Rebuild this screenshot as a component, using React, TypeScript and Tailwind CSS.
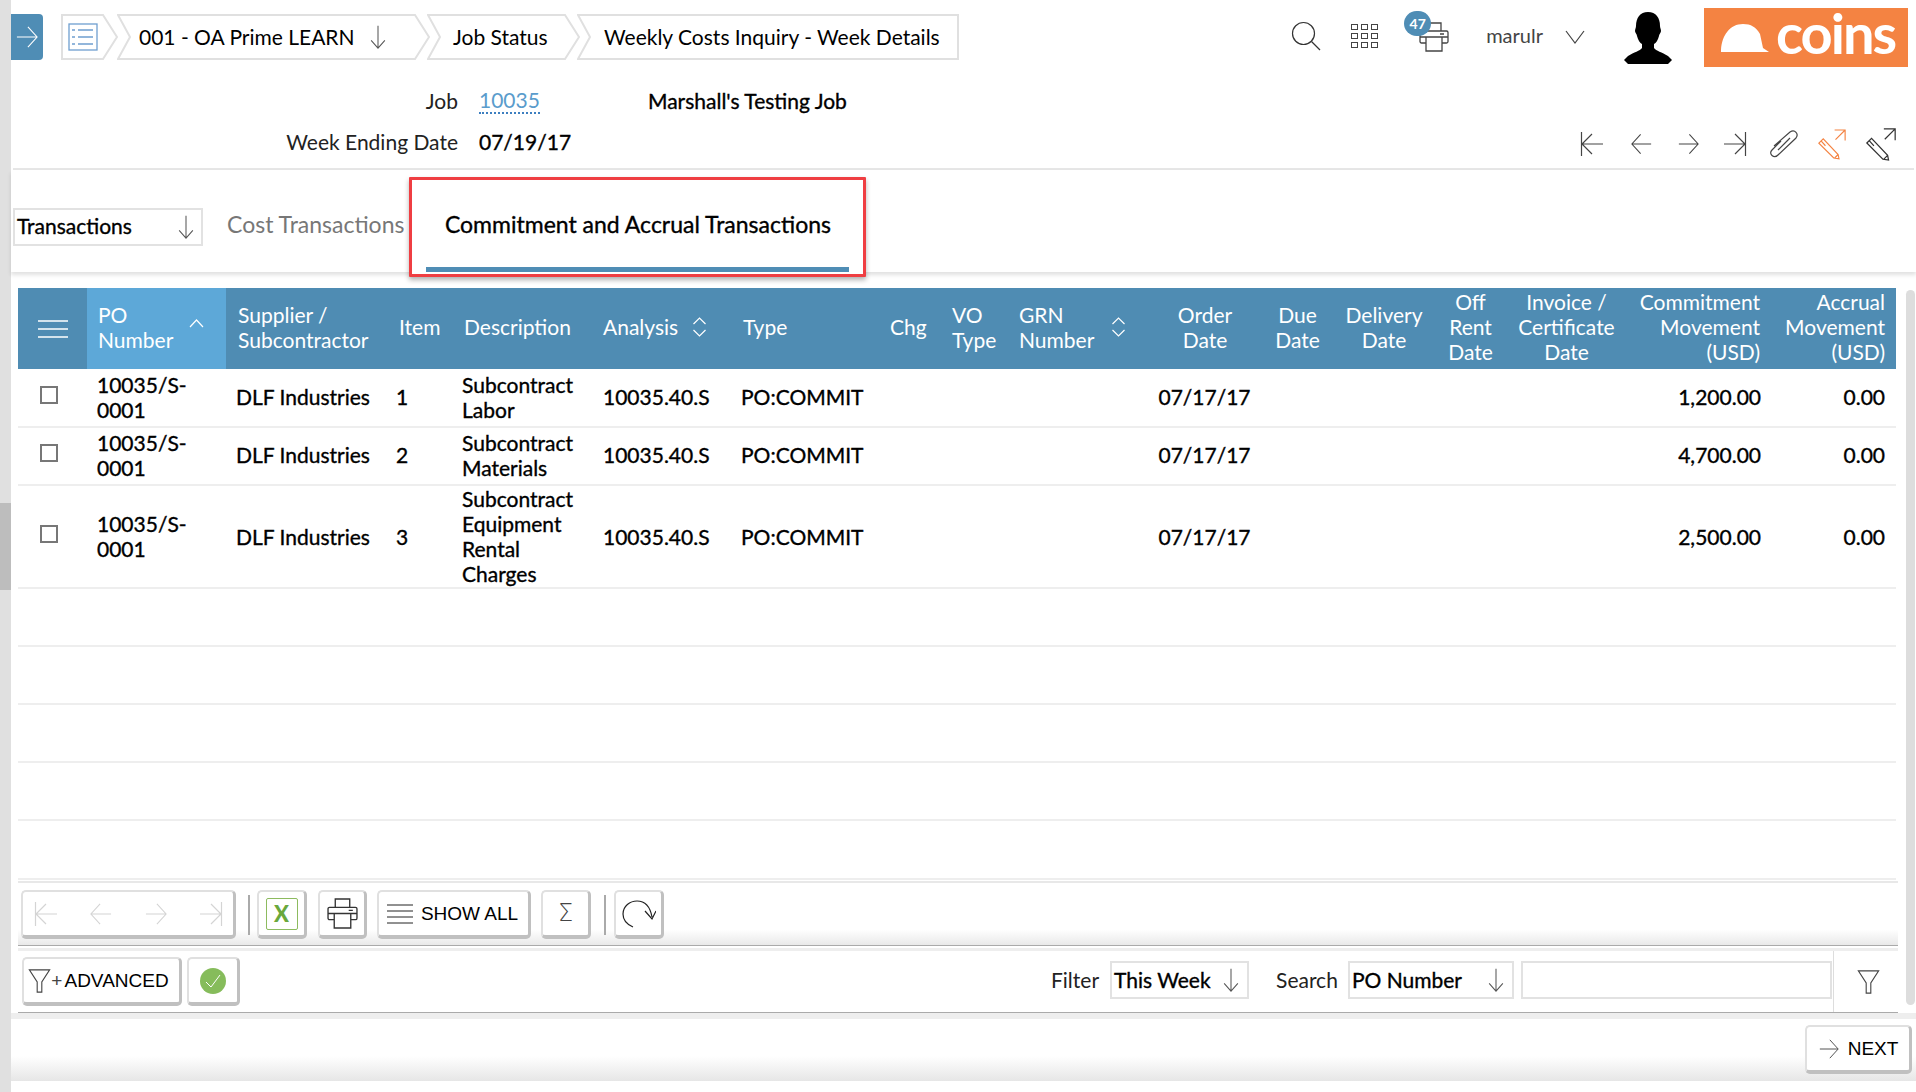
import type { ReactNode } from 'react'

type IconProps = { className?: string }

// Lato has no medium cut here, the data text gets a hair of stroke instead
const strong = '[-webkit-text-stroke:0.35px_black]'

function Ico({ className = '', box = '0 0 24 24', children }: { className?: string; box?: string; children: ReactNode }) {
  return (
    <svg viewBox={box} fill="none" stroke="currentColor" strokeWidth="1.2" className={className}>
      {children}
    </svg>
  )
}

const ArrowRight = ({ className }: IconProps) => (
  <Ico className={className}>
    <path d="M1 12H23M13 1l10 11-10 11" />
  </Ico>
)
const ArrowLeft = ({ className }: IconProps) => (
  <Ico className={className}>
    <path d="M23 12H1M11 1L1 12l10 11" />
  </Ico>
)
const ArrowFirst = ({ className }: IconProps) => (
  <Ico className={className}>
    <path d="M1.5 0V24M23 12H2M12 2L2 12l10 10" />
  </Ico>
)
const ArrowLast = ({ className }: IconProps) => (
  <Ico className={className}>
    <path d="M22.5 0V24M1 12H22M12 2l10 10-10 10" />
  </Ico>
)
const ArrowDown = ({ className }: IconProps) => (
  <Ico className={className} box="0 0 20 28">
    <path d="M10 1V27M2 18l8 9 8-9" />
  </Ico>
)
const Printer = ({ className }: IconProps) => (
  <Ico className={className} box="0 0 30 30">
    <path d="M8 9V1h14v8M7 21H2.500A1.500 1.500 0 0 1 1 19.500V10.500A1.500 1.500 0 0 1 2.500 9h25A1.500 1.500 0 0 1 29 10.500v9a1.500 1.500 0 0 1-1.500 1.500H23M1 15h28M7 15h16v14H7zM21 12h4" strokeWidth="1.300" />
  </Ico>
)
const Pencil = ({ className }: IconProps) => (
  <Ico className={className} box="0 0 32 36">
    <path d="M1 17l5-5 17 18 1 5-6-1zM3.500 14.500l5 5.500M19 34l4-4M19 2h12v12M31 2L20 13" strokeWidth="1.300" />
  </Ico>
)
const Funnel = ({ className }: IconProps) => (
  <Ico className={className} box="0 0 24 26">
    <path d="M1 1h22l-8.500 13v11h-5V14z" />
  </Ico>
)

function Crumb({ width, kind = 'mid', children }: { width: number; kind?: 'first' | 'mid' | 'last'; children: ReactNode }) {
  const right = kind === 'last' ? `H${width - 1}V45H1` : `H${width - 15}L${width - 1} 23L${width - 15} 45H1`
  const d = kind === 'first' ? `M1 1${right}Z` : `M1 1${right}L13 23Z`
  return (
    <div className="relative flex h-[46px] shrink-0 items-center" style={{ width }}>
      <svg className="absolute inset-0 h-full w-full" viewBox={`0 0 ${width} 46`} fill="white" stroke="#e0e0e0" strokeWidth="2">
        <path d={d} />
      </svg>
      <div className="relative flex w-full items-center">{children}</div>
    </div>
  )
}

function Button({ className = '', children }: { className?: string; children: ReactNode }) {
  return (
    <div className={`flex h-[49px] shrink-0 items-center justify-center rounded-[5px] border-2 border-b-[4px] border-r-[3px] border-[#e0e0e0] border-r-[#c0c0c0] border-b-[#c0c0c0] bg-white ${className}`}>
      {children}
    </div>
  )
}

function Select({ className = '', label }: { className?: string; label: string }) {
  return (
    <div className={`mb-[3px] flex h-[38px] items-center justify-between border-2 border-[#e2e2e2] bg-white pl-[2px] pr-[6px] ${className}`}>
      <span className={`mb-[2px] ${strong}`}>{label}</span>
      <ArrowDown className="h-[24px] w-[20px] text-[#555]" />
    </div>
  )
}

const SortBoth = () => (
  <Ico className="h-[20px] w-[15px] shrink-0" box="0 0 15 20">
    <path d="M1.500 7L7.500 1l6 6M1.500 13l6 6 6-6" />
  </Ico>
)

const rows = [
  { item: '1', desc: ['Subcontract', 'Labor'], amt: '1,200.00', h: 'h-[59px] pb-[2px]' },
  { item: '2', desc: ['Subcontract', 'Materials'], amt: '4,700.00', h: 'h-[58px] pb-[3px]' },
  { item: '3', desc: ['Subcontract', 'Equipment', 'Rental', 'Charges'], amt: '2,500.00', h: 'h-[103px] pb-[4px]' },
]

const cols =
  'grid grid-cols-[69px_139px_165px_65px_140px_138px_147px_62px_66px_142px_110px_75px_98px_77px_112px_148px_125px]'

export default function App() {
  return (
    <div className="flex h-[1092px] w-[1916px] overflow-hidden bg-white font-[Lato,sans-serif] text-[21px] leading-[25px] text-black">
      {/* scroll strip on the left */}
      <div className="flex w-[11px] shrink-0 flex-col bg-[#e0e0e0]">
        <div className="mt-[503px] h-[87px] bg-[#bdbdbd]" />
      </div>

      <div className="relative min-w-0 flex-1">
        {/* top bar */}
        <div className="flex h-[68px] items-start">
          <div className="mt-[14px] flex h-[46px] w-[32px] items-center justify-center rounded-r-[4px] bg-[#4f8db5] text-white">
            <ArrowRight className="h-[24px] w-[22px]" />
          </div>
          <div className="ml-[18px] mt-[14px] flex">
            <Crumb width={57} kind="first">
              <svg viewBox="0 0 30 28" className="ml-[7px] h-[28px] w-[30px]" fill="none" stroke="#6f9fd0" strokeWidth="1.300">
                <rect x="1" y="1" width="28" height="26" />
                <path d="M10 7h15M10 14h15M10 21h15M4 7h3M4 14h3M4 21h3" />
              </svg>
            </Crumb>
            <div className="-ml-[1px]">
              <Crumb width={313}>
                <span className="mb-[2px] ml-[22px] whitespace-nowrap">001 - OA Prime LEARN</span>
                <ArrowDown className="ml-[13px] h-[24px] w-[20px] text-[#555]" />
              </Crumb>
            </div>
            <div className="-ml-[3px]">
              <Crumb width={153}>
                <span className="mb-[2px] ml-[26px] whitespace-nowrap">Job Status</span>
              </Crumb>
            </div>
            <div className="-ml-[3px]">
              <Crumb width={382} kind="last">
                <span className="mb-[2px] ml-[27px] whitespace-nowrap">Weekly Costs Inquiry - Week Details</span>
              </Crumb>
            </div>
          </div>

          <div className="ml-auto flex items-start">
            <Ico className="mt-[21px] h-[30px] w-[30px] text-[#333]" box="0 0 30 30">
              <circle cx="12.500" cy="12.500" r="11" />
              <path d="M20.500 20.500L29 29" />
            </Ico>
            <div className="ml-[30px] mt-[24px] grid w-[27px] grid-cols-3 gap-[3px]">
              {Array.from({ length: 9 }).map((_, i) => (
                <div key={i} className="h-[6px] w-[7px] border border-[#444]" />
              ))}
            </div>
            <div className="relative ml-[41px] mt-[22px] h-[30px] w-[30px]">
              <Printer className="h-[30px] w-[30px] text-[#444]" />
              <div className="absolute -left-[15px] -top-[11px] flex h-[25px] w-[27px] items-center justify-center rounded-full bg-[#4f8db5] text-[14px] font-bold text-white">
                47
              </div>
            </div>
            <span className="ml-[37px] mt-[23px] text-[20px] text-[#444]">marulr</span>
            <Ico className="ml-[22px] mt-[30px] h-[14px] w-[20px] text-[#444]" box="0 0 20 14">
              <path d="M1 1l9 12 9-12" />
            </Ico>
            <svg viewBox="0 0 48 52" className="ml-[39px] mt-[12px] h-[52px] w-[48px]" fill="black">
              <path d="M24 0c8 0 12 6 12 14 0 2 1 3 1 5s-2 3-2 5c-1 4-3 7-5 8v4c2 3 8 4 14 8l4 4-4 4H4l-4-4 4-4c6-4 12-5 14-8v-4c-2-1-4-4-5-8 0-2-2-3-2-5s1-3 1-5C12 6 16 0 24 0z" />
            </svg>
            <div className="ml-[32px] mr-[8px] mt-[8px] flex h-[59px] w-[204px] items-center bg-[#f48342] pl-[16px] text-white">
              <svg viewBox="0 0 50 30" className="h-[30px] w-[50px] shrink-0" fill="white">
                <path d="M1 27C2 12 10 1 23 1c8 0 13 3 17 10l3 14 6 4H1z" />
              </svg>
              <span className="mb-[9px] ml-[6px] text-[56px] font-bold leading-none tracking-[-2px]">coins</span>
            </div>
          </div>
        </div>

        {/* job info */}
        <div className="relative h-[100px]">
          <div className="grid grid-cols-[447px_auto_1fr] items-center gap-x-[21px] gap-y-[15px] pt-[19px]">
            <span className="text-right text-[#222]">Job</span>
            <div className="flex items-center">
              <span className="w-[169px]">
                <span className="inline-block border-b-2 border-dotted border-[#3d7fc0] text-[#5a9ccc]">10035</span>
              </span>
              <span className={strong}>Marshall&apos;s Testing Job</span>
            </div>
            <span />
            <span className="text-right text-[#222]">Week Ending Date</span>
            <span className={strong}>07/19/17</span>
            <span />
          </div>
          <div className="absolute right-[19px] top-[59px] flex items-center text-[#444]">
            <ArrowFirst className="h-[28px] w-[24px]" />
            <ArrowLeft className="ml-[27px] h-[22px] w-[21px]" />
            <ArrowRight className="ml-[26px] h-[22px] w-[21px]" />
            <ArrowLast className="ml-[24px] h-[28px] w-[24px]" />
            <Ico className="ml-[21px] h-[30px] w-[32px]" box="0 0 32 30">
              <path d="M13 12L4 21c-4 4 2 9 6 5L28 9c3-4-1-9-6-6L6 17M22 9L10 21" />
            </Ico>
            <Pencil className="ml-[18px] h-[32px] w-[28px] text-[#f48342]" />
            <Pencil className="ml-[19px] h-[34px] w-[32px] text-[#333]" />
          </div>
        </div>
        <div className="mx-[2px] h-[2px] bg-[#e6e6e6]" />

        {/* tabs */}
        <div className="flex h-[102px] items-start shadow-[0_3px_4px_rgba(0,0,0,0.12)]">
          <div className="ml-[2px] mt-[38px] flex h-[38px] w-[190px] items-center justify-between border-2 border-[#e2e2e2] pl-[2px] pr-[5px]">
            <span className={`mb-[3px] ${strong}`}>Transactions</span>
            <ArrowDown className="h-[24px] w-[20px] text-[#555]" />
          </div>
          <span className="ml-[24px] mt-[42px] whitespace-nowrap text-[23px] text-[#777]">Cost Transactions</span>
          <div className="relative z-10 ml-[5px] mt-[7px] flex h-[100px] w-[457px] flex-col items-center rounded-[1px] border-[3px] border-[#ef3e42] bg-white shadow-[0_3px_5px_rgba(0,0,0,0.3)]">
            <span className={`mt-[32px] whitespace-nowrap text-[23px] ${strong}`}>Commitment and Accrual Transactions</span>
            <div className="mt-[30px] h-[5px] w-[423px] bg-[#4f8db5]" />
          </div>
        </div>

        {/* grid */}
        <div className="ml-[7px] mt-[16px] w-[1878px]">
          <div className={`${cols} h-[81px] items-center bg-[#4f8cb3] leading-[25px] text-white`}>
            <div className="flex justify-center">
              <svg viewBox="0 0 30 18" className="h-[18px] w-[30px]" stroke="white" strokeWidth="1.500">
                <path d="M0 1h30M0 9h30M0 17h30" />
              </svg>
            </div>
            <div className="flex h-full items-center justify-between bg-[#5da8d8] pb-[4px] pl-[11px] pr-[22px]">
              <span>
                PO
                <br />
                Number
              </span>
              <Ico className="mb-[6px] h-[9px] w-[15px]" box="0 0 15 9">
                <path d="M1 8l6.500-7 6.500 7" />
              </Ico>
            </div>
            <div className="pb-[4px] pl-[12px]">
              Supplier /
              <br />
              Subcontractor
            </div>
            <div className="pb-[4px] pl-[8px]">Item</div>
            <div className="pb-[4px] pl-[8px]">Description</div>
            <div className="flex items-center gap-[14px] pb-[4px] pl-[7px]">
              <span>Analysis</span>
              <SortBoth />
            </div>
            <div className="pb-[4px] pl-[9px]">Type</div>
            <div className="pb-[4px] pl-[9px]">Chg</div>
            <div className="pb-[4px] pl-[9px]">
              VO
              <br />
              Type
            </div>
            <div className="flex items-center gap-[17px] pb-[4px] pl-[10px]">
              <span>
                GRN
                <br />
                Number
              </span>
              <SortBoth />
            </div>
            <div className="pb-[4px] pr-[2px] text-center">
              Order
              <br />
              Date
            </div>
            <div className="pb-[4px] pr-[2px] text-center">
              Due
              <br />
              Date
            </div>
            <div className="pb-[4px] pr-[2px] text-center">
              Delivery
              <br />
              Date
            </div>
            <div className="pb-[4px] pr-[4px] text-center">
              Off
              <br />
              Rent
              <br />
              Date
            </div>
            <div className="pb-[4px] pr-[1px] text-center">
              Invoice /
              <br />
              Certificate
              <br />
              Date
            </div>
            <div className="pb-[4px] pr-[11px] text-right">
              Commitment
              <br />
              Movement
              <br />
              (USD)
            </div>
            <div className="pb-[4px] pr-[11px] text-right">
              Accrual
              <br />
              Movement
              <br />
              (USD)
            </div>
          </div>

          {rows.map((r) => (
            <div key={r.item} className={`${cols} ${r.h} items-center border-b-2 border-[#eeeeee] ${strong}`}>
              <div className="pl-[22px]">
                <div className="mb-[4px] h-[18px] w-[18px] border-2 border-[#777]" />
              </div>
              <div className="pl-[10px]">
                10035/S-
                <br />
                0001
              </div>
              <div className="pl-[10px]">DLF Industries</div>
              <div className="pl-[5px]">{r.item}</div>
              <div className="pl-[6px]">
                {r.desc.map((d) => (
                  <div key={d}>{d}</div>
                ))}
              </div>
              <div className="pl-[7px]">10035.40.S</div>
              <div className="pl-[7px]">PO:COMMIT</div>
              <div />
              <div />
              <div />
              <div className="pr-[3px] text-center">07/17/17</div>
              <div />
              <div />
              <div />
              <div />
              <div className="pr-[10px] text-right">{r.amt}</div>
              <div className="pr-[11px] text-right">0.00</div>
            </div>
          ))}
          <div className="h-[58px] border-b-2 border-[#eeeeee]" />
          <div className="h-[58px] border-b-2 border-[#eeeeee]" />
          <div className="h-[58px] border-b-2 border-[#eeeeee]" />
          <div className="h-[58px] border-b-2 border-[#eeeeee]" />
          <div className="h-[59px] border-b-2 border-[#eeeeee]" />
        </div>

        {/* pager toolbar */}
        <div className="ml-[7px] mt-[1px] h-[65px] w-[1880px] border-t-2 border-b border-t-[#e8e8e8] border-b-[#aaaaaa] bg-linear-to-b from-white from-75% to-[#e9e9e9]">
          <div className="flex items-center pl-[3px] pt-[7px]">
            <Button className="w-[215px] gap-[31px] text-[#d4d4d4]">
              <ArrowFirst className="h-[24px] w-[24px]" />
              <ArrowLeft className="h-[22px] w-[24px]" />
              <ArrowRight className="h-[22px] w-[24px]" />
              <ArrowLast className="h-[24px] w-[24px]" />
            </Button>
            <div className="ml-[12px] h-[40px] w-[2px] bg-[#aaaaaa]" />
            <Button className="ml-[7px] w-[50px]">
              <div className="flex h-[32px] w-[32px] items-center justify-center rounded-[2px] border border-[#8dbb5f] text-[22px] font-black text-[#6aa83c]">
                X
              </div>
            </Button>
            <Button className="ml-[11px] w-[49px] text-[#333]">
              <Printer className="h-[31px] w-[31px]" />
            </Button>
            <Button className="ml-[10px] w-[154px] gap-[8px] pr-[2px] font-['Liberation_Sans',sans-serif] text-[19px]">
              <svg viewBox="0 0 26 20" className="h-[20px] w-[26px]" stroke="#222" strokeWidth="1">
                <path d="M0 1h26M0 7h26M0 13h26M0 19h26" />
              </svg>
              <span>SHOW ALL</span>
            </Button>
            <Button className="ml-[10px] w-[50px] text-[24px] text-[#444]">
              <span className="font-['DejaVu_Sans',sans-serif] font-extralight">Σ</span>
            </Button>
            <div className="ml-[13px] h-[40px] w-[2px] bg-[#aaaaaa]" />
            <Button className="ml-[8px] w-[50px] text-[#222]">
              <Ico className="h-[28px] w-[34px]" box="0 0 34 28">
                <path d="M11 27C4 24 1 19 1 14 1 6 8 1 15 1c7 0 13 5 15 16M23 11l7 8 4-8" />
              </Ico>
            </Button>
          </div>
        </div>

        {/* filter bar */}
        <div className="ml-[7px] mt-[2px] flex h-[65px] w-[1880px] items-center border-t-[3px] border-b border-t-[#eeeeee] border-b-[#aaaaaa] pl-[4px]">
          <Button className="w-[160px] pr-[6px] font-['Liberation_Sans',sans-serif] text-[19px]">
            <Ico className="h-[24px] w-[23px] text-[#444]" box="0 0 24 26">
              <path d="M1 1h22l-8.500 13v11h-5V14z" />
            </Ico>
            <span className="mr-[2px] text-[#444]">+</span>
            <span>ADVANCED</span>
          </Button>
          <Button className="ml-[5px] w-[53px]">
            <div className="flex h-[26px] w-[26px] items-center justify-center rounded-full bg-[#86bc5b]">
              <svg viewBox="0 0 16 14" className="h-[14px] w-[16px]" fill="none" stroke="white">
                <path d="M1 8l5 5L15 1" />
              </svg>
            </div>
          </Button>
          <span className="mb-[5px] ml-[811px] text-[#222]">Filter</span>
          <Select className="ml-[11px] w-[139px]" label="This Week" />
          <span className="mb-[5px] ml-[27px] text-[#222]">Search</span>
          <Select className="ml-[10px] w-[166px]" label="PO Number" />
          <div className="mb-[3px] ml-[7px] h-[38px] w-[311px] border-2 border-[#e2e2e2]" />
          <div className="ml-[1px] flex h-full flex-1 items-center justify-center border-l border-[#dddddd] pl-[6px]">
            <Funnel className="h-[24px] w-[23px] text-[#444]" />
          </div>
        </div>

        {/* footer */}
        <div className="h-[6px] bg-[#eeeeee]" />
        <div className="flex h-[62px] justify-end bg-linear-to-b from-white from-60% to-[#e6e6e6] pr-[4px] pt-[6px]">
          <Button className="w-[107px] gap-[8px] font-['Liberation_Sans',sans-serif] text-[19px]">
            <ArrowRight className="h-[20px] w-[22px] text-[#555]" />
            <span>NEXT</span>
          </Button>
        </div>

        {/* table scrollbar */}
        <div className="absolute left-[1895px] top-[290px] h-[715px] w-[9px] rounded-full bg-[#dddddd]" />
      </div>
    </div>
  )
}
